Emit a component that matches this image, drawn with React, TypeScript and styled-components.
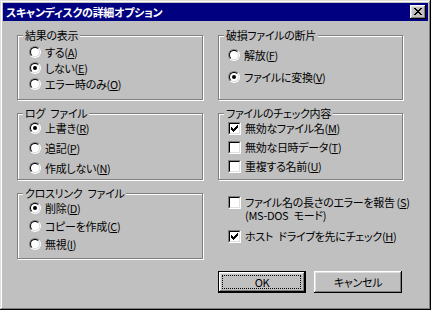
import React from "react";
import styled, { createGlobalStyle } from "styled-components";

const Global = createGlobalStyle`
  html, body { margin: 0; padding: 0; background: #c0c0c0; }
  * { box-sizing: border-box; }
`;

const Window = styled.div`
  width: 431px;
  height: 310px;
  background: #c0c0c0;
  padding: 3px;
  box-shadow: inset -1px -1px #000, inset 1px 1px #dfdfdf, inset -2px -2px #808080, inset 2px 2px #fff;
  display: flex;
  flex-direction: column;
  font-family: "Noto Sans CJK JP", "Noto Sans", sans-serif;
  font-size: 11px;
  letter-spacing: -0.3px;
  font-feature-settings: "palt" 1;
  color: #000;
`;

const TitleBar = styled.div`
  height: 18px;
  background: #000080;
  display: flex;
  align-items: center;
  justify-content: space-between;
  padding: 0 2px 0 3px;
`;

const Title = styled.span`
  color: #fff;
  font-weight: bold;
  font-size: 11px;
  line-height: 16px;
`;

const CloseButton = styled.div`
  width: 16px;
  height: 14px;
  background: #c0c0c0;
  box-shadow: inset -1px -1px #000, inset 1px 1px #fff, inset -2px -2px #808080, inset 2px 2px #dfdfdf;
  display: flex;
  align-items: center;
  justify-content: center;
  padding: 0 1px 1px 0;
`;

const Body = styled.div`
  flex: 1;
  display: flex;
  flex-direction: column;
  padding: 14px 26px 0 14px;
`;

const Grid = styled.div`
  display: grid;
  grid-template-columns: 186px 185px;
  grid-template-rows: 65px 67px 66px;
  column-gap: 15px;
  row-gap: 13px;
`;

const Group = styled.div<{ $top: number; $left: number; $gap: number }>`
  position: relative;
  border: 1px solid #808080;
  box-shadow: inset 1px 1px #fff, 1px 1px #fff;
  display: flex;
  flex-direction: column;
  padding-top: ${(p) => p.$top}px;
  padding-left: ${(p) => p.$left}px;
  gap: ${(p) => p.$gap}px;
`;

const Legend = styled.span`
  position: absolute;
  top: -9px;
  left: 5px;
  padding: 0 2px;
  background: #c0c0c0;
  line-height: 16px;
  white-space: nowrap;
`;

const Row = styled.label`
  display: flex;
  align-items: center;
  gap: 4px;
  height: 16px;
  line-height: 16px;
  white-space: nowrap;
`;

const MultiRow = styled.label<{ $mt?: number }>`
  display: flex;
  align-items: flex-start;
  gap: 4px;
  margin-top: ${(p) => p.$mt ?? 0}px;
`;

const MultiText = styled.span`
  line-height: 13px;
  white-space: nowrap;
`;

const Mn = styled.span`
  text-decoration: underline;
  text-underline-offset: 1px;
`;

const RadioOuter = styled.span`
  width: 12px;
  height: 12px;
  flex: none;
  border-radius: 50%;
  border: 1px solid;
  border-color: #808080 #fff #fff #808080;
  display: flex;
`;

const RadioInner = styled.span`
  flex: 1;
  border-radius: 50%;
  border: 1px solid;
  border-color: #000 #dfdfdf #dfdfdf #000;
  background: #fff;
  display: flex;
  align-items: center;
  justify-content: center;
`;

const Dot = styled.span`
  width: 4px;
  height: 4px;
  border-radius: 50%;
  background: #000;
`;

const CheckOuter = styled.span`
  width: 13px;
  height: 13px;
  flex: none;
  border: 1px solid;
  border-color: #808080 #fff #fff #808080;
  display: flex;
`;

const CheckInner = styled.span`
  flex: 1;
  border: 1px solid;
  border-color: #000 #dfdfdf #dfdfdf #000;
  background: #fff;
  display: flex;
  align-items: center;
  justify-content: center;
`;

const FreeArea = styled.div`
  display: flex;
  flex-direction: column;
  padding: 3px 0 0 10px;
`;

const Footer = styled.div`
  display: flex;
  justify-content: flex-end;
  gap: 8px;
  margin-top: 12px;
`;

const Button = styled.div<{ $default?: boolean }>`
  position: relative;
  width: 88px;
  height: 22px;
  display: flex;
  align-items: center;
  justify-content: center;
  line-height: 16px;
  background: #c0c0c0;
  ${(p) =>
    p.$default
      ? `border: 1px solid #000;
         box-shadow: inset -1px -1px #000, inset 1px 1px #fff, inset -2px -2px #808080, inset 2px 2px #dfdfdf;
         &::after { content: ""; position: absolute; inset: 3px 4px 3px 3px; border: 1px dotted #000; }`
      : `box-shadow: inset -1px -1px #000, inset 1px 1px #fff, inset -2px -2px #808080, inset 2px 2px #dfdfdf;`}
`;

const Radio = ({ checked }: { checked?: boolean }) => (
  <RadioOuter>
    <RadioInner>{checked && <Dot />}</RadioInner>
  </RadioOuter>
);

const Check = ({ checked }: { checked?: boolean }) => (
  <CheckOuter>
    <CheckInner>
      {checked && (
        <svg width="7" height="7" viewBox="0 0 7 7" shapeRendering="crispEdges">
          <path d="M0 2h1v1h1v1h1v-1h1v-1h1v-1h1v-1h1v3h-1v1h-1v1h-1v1h-1v1h-1v-1h-1v-1h-1v-1h-1z" fill="#000" />
        </svg>
      )}
    </CheckInner>
  </CheckOuter>
);

const Label = ({ text, mn }: { text: string; mn: string }) => (
  <span>
    {text}(<Mn>{mn}</Mn>)
  </span>
);

export default function App() {
  return (
    <>
      <Global />
      <Window>
        <TitleBar>
          <Title>スキャンディスクの詳細オプション</Title>
          <CloseButton>
            <svg width="8" height="7" viewBox="0 0 8 7" shapeRendering="crispEdges">
              <path d="M0 0h2v1h1v1h2v-1h1v-1h2v1h-1v1h-1v1h-1v1h1v1h1v1h1v1h-2v-1h-1v-1h-2v1h-1v1h-2v-1h1v-1h1v-1h1v-1h-1v-1h-1v-1h-1z" fill="#000" />
            </svg>
          </CloseButton>
        </TitleBar>
        <Body>
          <Grid>
            <Group $top={8} $left={11} $gap={0}>
              <Legend>結果の表示</Legend>
              <Row><Radio /><Label text="する" mn="A" /></Row>
              <Row><Radio checked /><Label text="しない" mn="E" /></Row>
              <Row><Radio /><Label text="エラー時のみ" mn="O" /></Row>
            </Group>
            <Group $top={11} $left={9} $gap={6}>
              <Legend>破損ファイルの断片</Legend>
              <Row><Radio /><Label text="解放" mn="F" /></Row>
              <Row><Radio checked /><Label text="ファイルに変換" mn="V" /></Row>
            </Group>
            <Group $top={6} $left={11} $gap={4}>
              <Legend>ログ{"\u2002"}ファイル</Legend>
              <Row><Radio checked /><Label text="上書き" mn="R" /></Row>
              <Row><Radio /><Label text="追記" mn="P" /></Row>
              <Row><Radio /><Label text="作成しない" mn="N" /></Row>
            </Group>
            <Group $top={6} $left={9} $gap={3}>
              <Legend>ファイルのチェック内容</Legend>
              <Row><Check checked /><Label text="無効なファイル名" mn="M" /></Row>
              <Row><Check /><Label text="無効な日時データ" mn="T" /></Row>
              <Row><Check /><Label text="重複する名前" mn="U" /></Row>
            </Group>
            <Group $top={6} $left={11} $gap={2}>
              <Legend>クロスリンク{"\u2002"}ファイル</Legend>
              <Row><Radio checked /><Label text="削除" mn="D" /></Row>
              <Row><Radio /><Label text="コピーを作成" mn="C" /></Row>
              <Row><Radio /><Label text="無視" mn="I" /></Row>
            </Group>
            <FreeArea>
              <MultiRow>
                <Check />
                <MultiText>
                  ファイル名の長さのエラーを報告{"\u2009"}(<Mn>S</Mn>)
                  <br />
                  (MS-DOS{"\u2002"}モード)
                </MultiText>
              </MultiRow>
              <MultiRow $mt={8}>
                <Check checked />
                <MultiText>
                  ホスト{"\u2002"}ドライブを先にチェック(<Mn>H</Mn>)
                </MultiText>
              </MultiRow>
            </FreeArea>
          </Grid>
          <Footer>
            <Button $default>OK</Button>
            <Button>キャンセル</Button>
          </Footer>
        </Body>
      </Window>
    </>
  );
}
